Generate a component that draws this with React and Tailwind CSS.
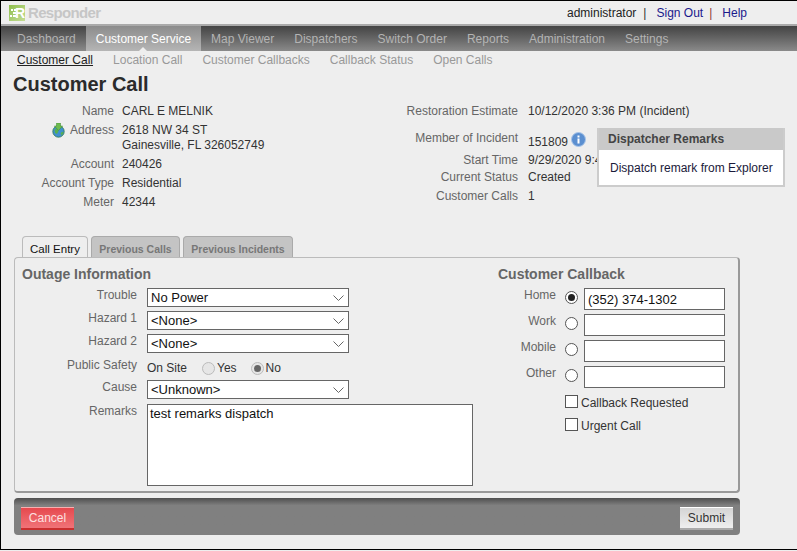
const navItems = ['Dashboard', 'Customer Service', 'Map Viewer', 'Dispatchers', 'Switch Order', 'Reports', 'Administration', 'Settings'];
const subItems = ['Customer Call', 'Location Call', 'Customer Callbacks', 'Callback Status', 'Open Calls'];

function Logo() {
    return (
        <div className="flex items-center gap-[3px]">
            <div className="relative flex h-[16px] w-[16px] items-center justify-end bg-gradient-to-br from-[#8fbf4d] to-[#c4dc94]">
                <svg className="absolute left-[1px] top-[3px]" width="7" height="11" viewBox="0 0 7 11">
                    <path d="M1 1h2v2H1zM4 1h2v2H4zM3 4h3v2H3zM0 7h2v2H0zM3 7h3v2H3z" fill="#fff" />
                </svg>
                <span className="text-[14px] font-bold leading-none text-white">R</span>
            </div>
            <span className="text-[15px] font-bold leading-none tracking-[-0.65px] text-[#c6c6c6]">Responder</span>
        </div>
    );
}

function GlobeIcon() {
    return (
        <svg width="13" height="15" viewBox="0 0 13 15">
            <circle cx="6.5" cy="8.5" r="5.7" fill="#3f8fd0" stroke="#2d7a4c" strokeWidth="0.8" />
            <path d="M2.5 6.5l2.5-1 1.5 2.5-1.5 3-2-1zM8.5 10l2.5-1.5.5 1.5-2 2.5z" fill="#58b04f" />
            <path d="M4.5 0h4v3h2.2L6.5 7.5 2.3 3h2.2z" fill="#6dbb4c" stroke="#3d8a34" strokeWidth="0.5" />
        </svg>
    );
}

function InfoIcon() {
    return (
        <svg width="15" height="15" viewBox="0 0 15 15">
            <circle cx="7.5" cy="7.5" r="7" fill="#5b8fd0" stroke="#a9c5e8" />
            <rect x="6.5" y="6.5" width="2" height="5" fill="#fff" />
            <rect x="6.5" y="3.5" width="2" height="2" fill="#fff" />
        </svg>
    );
}

function InfoRow({ label, className = '', icon, children }) {
    return (
        <div className={`flex ${className}`}>
            <div className="flex w-[101px] shrink-0 justify-end gap-[5px] text-[#666]">
                {icon}
                <span>{label}</span>
            </div>
            <div className="ml-[8px] text-[#333]">{children}</div>
        </div>
    );
}

function StatusRow({ label, className = '', children }) {
    return (
        <div className={`flex ${className}`}>
            <div className="w-[135px] shrink-0 text-right text-[#666]">{label}</div>
            <div className="ml-[10px] whitespace-nowrap text-[#333]">{children}</div>
        </div>
    );
}

function Picker({ value, className = '' }) {
    return (
        <div className={`relative h-[19px] w-[202px] ${className}`}>
            <select
                defaultValue={value}
                className="h-full w-full appearance-none rounded-none border border-[#666] bg-white pl-[3px] text-[13px] leading-[17px] text-[#111]"
            >
                <option>{value}</option>
            </select>
            <svg className="pointer-events-none absolute right-[5px] top-[7px]" width="11" height="6" viewBox="0 0 11 6">
                <path d="M0.5 0.5L5.5 5.5L10.5 0.5" fill="none" stroke="#666" />
            </svg>
        </div>
    );
}

function FormLabel({ children, className = '' }) {
    return <div className={`w-[115px] shrink-0 text-right text-[#666] ${className}`}>{children}</div>;
}

function Radio({ checked, muted }) {
    return (
        <span
            className={`flex h-[13px] w-[13px] shrink-0 items-center justify-center rounded-full border ${
                muted ? 'border-[#bbb] bg-[#e6e6e6]' : 'border-[#555] bg-white'
            }`}
        >
            {checked && <span className={`h-[7px] w-[7px] rounded-full ${muted ? 'bg-[#666]' : 'bg-[#222]'}`} />}
        </span>
    );
}

function CallbackRow({ label, value = '', checked }) {
    return (
        <div className="flex h-[22px]">
            <div className="w-[58px] text-right text-[#666]">{label}</div>
            <div className="ml-[9px] mt-[3px]">
                <Radio checked={checked} />
            </div>
            <input
                readOnly
                value={value}
                className="ml-[6px] h-[22px] w-[141px] border border-[#666] bg-white px-[3px] text-[13px] text-[#111]"
            />
        </div>
    );
}

function CheckRow({ label }) {
    return (
        <div className="ml-[67px] flex h-[13px] items-center">
            <span className="h-[13px] w-[13px] border border-[#555] bg-white" />
            <span className="ml-[3px] mt-[3px] text-[#333]">{label}</span>
        </div>
    );
}

export default function App() {
    return (
        <div className="h-[551px] w-[797px] bg-[#eee]">
            <div className="flex h-[550px] w-[797px] flex-col overflow-hidden border-y border-l border-black bg-[#eee] font-['Liberation_Sans',Arial,sans-serif] text-[12px] leading-[14px]">
                <div className="flex h-[23px] shrink-0 items-center justify-between pl-[8px] pr-[50px]">
                    <Logo />
                    <div className="flex gap-[7px] text-[#222]">
                        <span>administrator</span>
                        <span className="text-[#333]">|</span>
                        <span className="ml-[3px] text-[#1a1a8c]">Sign Out</span>
                        <span className="ml-[-1px] text-[#8c3a3a]">|</span>
                        <span className="ml-[3px] text-[#1a1a8c]">Help</span>
                    </div>
                </div>

                <div className="flex h-[27px] shrink-0 border-t-2 border-[#aaa] bg-gradient-to-b from-[#444] to-[#8a8a8a] pl-[6px]">
                    {navItems.map((item) => (
                        <div
                            key={item}
                            className={`relative flex items-center px-[10px] ${
                                item === 'Customer Service'
                                    ? 'bg-gradient-to-b from-[#8c8c8c] to-[#b5b5b5] text-white'
                                    : 'text-[#b4b4b4]'
                            }`}
                        >
                            {item}
                            {item === 'Customer Service' && (
                                <span className="absolute bottom-0 left-[53px] h-0 w-0 border-x-[4px] border-b-[4px] border-x-transparent border-b-[#eee]" />
                            )}
                        </div>
                    ))}
                </div>

                <div className="flex h-[17px] shrink-0 items-center gap-[20px] pl-[16px]">
                    {subItems.map((item, i) => (
                        <span key={item} className={i === 0 ? 'text-[#222] underline' : 'text-[#999]'}>
                            {item}
                        </span>
                    ))}
                </div>

                <h1 className="ml-[12px] mt-[4px] text-[20px] font-bold leading-[24px] text-[#2b2b2b]">Customer Call</h1>

                <div className="relative mt-[8px] flex h-[132px] shrink-0">
                    <div className="ml-[12px] w-[268px] shrink-0">
                        <InfoRow label="Name">CARL E MELNIK</InfoRow>
                        <InfoRow label="Address" className="mt-[5px] leading-[15px]" icon={<GlobeIcon />}>
                            2618 NW 34 ST
                            <br />
                            Gainesville, FL 326052749
                        </InfoRow>
                        <InfoRow label="Account" className="mt-[4px]">240426</InfoRow>
                        <InfoRow label="Account Type" className="mt-[5px]">Residential</InfoRow>
                        <InfoRow label="Meter" className="mt-[5px]">42344</InfoRow>
                    </div>
                    <div className="ml-[102px]">
                        <StatusRow label="Restoration Estimate">10/12/2020 3:36 PM (Incident)</StatusRow>
                        <StatusRow label="Member of Incident" className="mt-[13px]">
                            <span className="mt-[1px] inline-flex items-start gap-[3px]">
                                <span className="mt-[3px]">151809</span>
                                <InfoIcon />
                            </span>
                        </StatusRow>
                        <StatusRow label="Start Time" className="mt-[4px]">9/29/2020 9:45 AM</StatusRow>
                        <StatusRow label="Current Status" className="mt-[3px]">Created</StatusRow>
                        <StatusRow label="Customer Calls" className="mt-[5px]">1</StatusRow>
                    </div>
                    <div className="absolute left-[596px] top-[24px] w-[188px] border-2 border-t-0 border-[#ccc] bg-white">
                        <div className="flex h-[22px] items-center bg-[#c9c9c9] pl-[9px] font-bold text-[#444]">Dispatcher Remarks</div>
                        <div className="flex h-[35px] items-center pl-[11px] text-[#1a1a3a]">Dispatch remark from Explorer</div>
                    </div>
                </div>

                <div className="ml-[21px] flex h-[21px] shrink-0 items-end gap-[3px]">
                    <div className="z-10 flex h-[21px] w-[66px] items-center justify-center rounded-t-[4px] border border-b-0 border-[#bbb] bg-[#eee] pt-[3px] text-[11.5px] text-[#111]">Call Entry</div>
                    <div className="flex h-[21px] w-[89px] items-center justify-center rounded-t-[4px] border border-b-0 border-[#aaa] bg-[#c4c4c4] pt-[3px] text-[10.5px] font-bold text-[#777]">Previous Calls</div>
                    <div className="flex h-[21px] w-[110px] items-center justify-center rounded-t-[4px] border border-b-0 border-[#aaa] bg-[#c4c4c4] pt-[3px] text-[10.5px] font-bold text-[#777]">Previous Incidents</div>
                </div>

                <div className="ml-[13px] flex h-[236px] w-[726px] shrink-0 rounded-[4px] border border-[#bbb] border-b-2 border-r-2 border-b-[#999] border-r-[#999] bg-[#eee]">
                    <div className="ml-[7px] w-[476px] shrink-0">
                        <h2 className="mt-[8px] text-[14px] font-bold leading-[16px] text-[#666]">Outage Information</h2>
                        <div className="mt-[6px] flex">
                            <FormLabel>Trouble</FormLabel>
                            <Picker value="No Power" className="ml-[10px]" />
                        </div>
                        <div className="mt-[4px] flex">
                            <FormLabel>Hazard 1</FormLabel>
                            <Picker value="<None>" className="ml-[10px]" />
                        </div>
                        <div className="mt-[4px] flex">
                            <FormLabel>Hazard 2</FormLabel>
                            <Picker value="<None>" className="ml-[10px]" />
                        </div>
                        <div className="mt-[5px] flex h-[18px]">
                            <FormLabel>Public Safety</FormLabel>
                            <div className="ml-[10px] mt-[2px] flex items-center text-[#333]">
                                <span>On Site</span>
                                <span className="ml-[15px]"><Radio muted /></span>
                                <span className="ml-[2px]">Yes</span>
                                <span className="ml-[14px]"><Radio checked muted /></span>
                                <span className="ml-[2px]">No</span>
                            </div>
                        </div>
                        <div className="mt-[4px] flex">
                            <FormLabel>Cause</FormLabel>
                            <Picker value="<Unknown>" className="ml-[10px]" />
                        </div>
                        <div className="mt-[5px] flex">
                            <FormLabel>Remarks</FormLabel>
                            <textarea
                                readOnly
                                value="test remarks dispatch"
                                className="ml-[10px] h-[82px] w-[326px] resize-none border border-[#666] bg-white px-[2px] py-[1px] text-[13px] leading-[16px] text-[#111]"
                            />
                        </div>
                    </div>
                    <div className="flex-1">
                        <h2 className="mt-[8px] text-[14px] font-bold leading-[16px] text-[#666]">Customer Callback</h2>
                        <div className="mt-[6px] flex flex-col gap-[4px]">
                            <CallbackRow label="Home" value="(352) 374-1302" checked />
                            <CallbackRow label="Work" />
                            <CallbackRow label="Mobile" />
                            <CallbackRow label="Other" />
                        </div>
                        <div className="mt-[7px] flex flex-col gap-[10px]">
                            <CheckRow label="Callback Requested" />
                            <CheckRow label="Urgent Call" />
                        </div>
                    </div>
                </div>

                <div className="ml-[13px] mt-[5px] flex h-[37px] w-[726px] shrink-0 items-center justify-between rounded-[4px] bg-gradient-to-b from-[#4f4f4f] from-0% to-[#808080] to-[20%] pl-[7px] pr-[7px] pt-[4px]">
                    <button type="button" className="h-[23px] w-[53px] border-t border-b-2 border-t-[#f6b0b0] border-b-[#c92e2e] bg-gradient-to-b from-[#e6484e] to-[#f07378] text-[12px] text-[#fde0e0]">Cancel</button>
                    <button type="button" className="h-[23px] w-[53px] border-t border-b-2 border-t-white border-b-[#aaa] bg-gradient-to-b from-[#d4d4d4] to-[#efefef] text-[12px] text-[#333]">Submit</button>
                </div>
            </div>
        </div>
    );
}
